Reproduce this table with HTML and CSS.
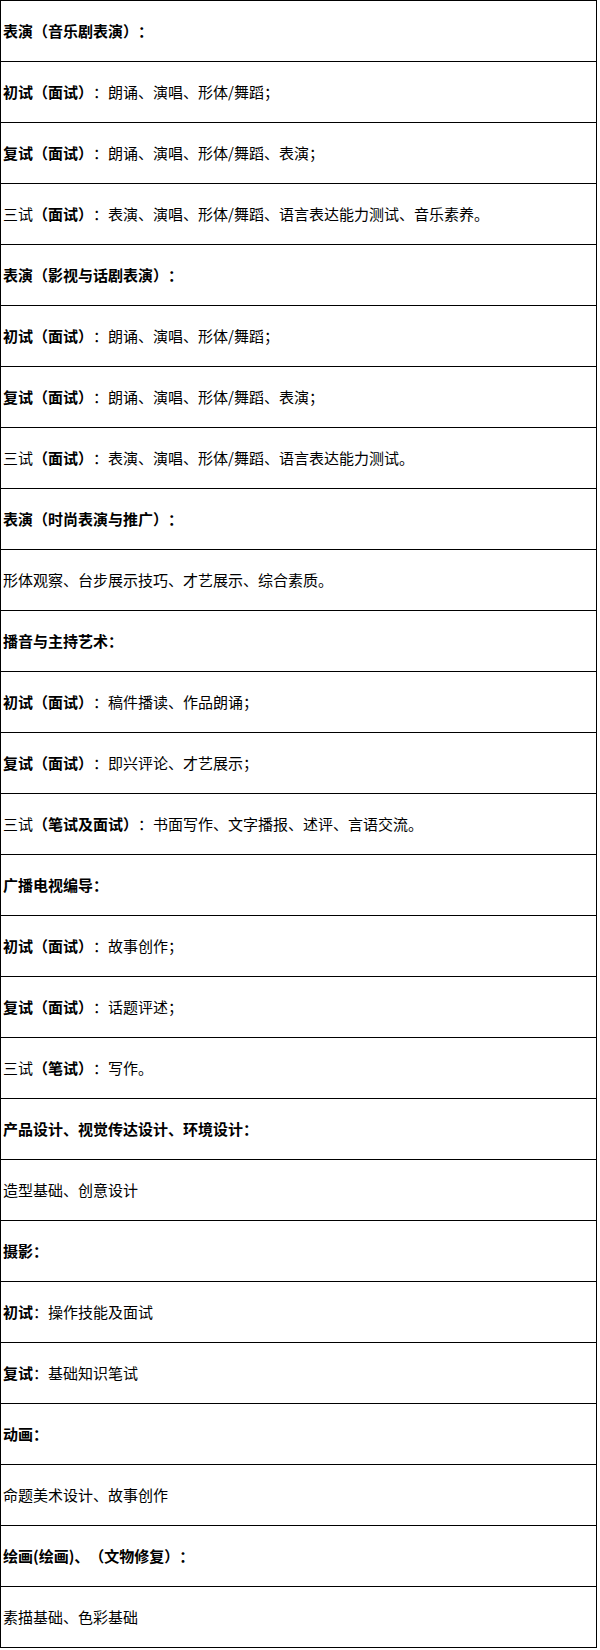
FILE: index.html
```html
<!DOCTYPE html>
<html lang="zh">
<head>
<meta charset="utf-8">
<link rel="stylesheet" href="styles.css">
</head>
<body>
<table class="exam">
<tbody>
<tr><td><b>表演（音乐剧表演）：</b></td></tr>
<tr><td><b>初试（面试）</b>：朗诵、演唱、形体/舞蹈；</td></tr>
<tr><td><b>复试（面试）</b>：朗诵、演唱、形体/舞蹈、表演；</td></tr>
<tr><td>三试<b>（面试）</b>：表演、演唱、形体/舞蹈、语言表达能力测试、音乐素养。</td></tr>
<tr><td><b>表演（影视与话剧表演）：</b></td></tr>
<tr><td><b>初试（面试）</b>：朗诵、演唱、形体/舞蹈；</td></tr>
<tr><td><b>复试（面试）</b>：朗诵、演唱、形体/舞蹈、表演；</td></tr>
<tr><td>三试<b>（面试）</b>：表演、演唱、形体/舞蹈、语言表达能力测试。</td></tr>
<tr><td><b>表演（时尚表演与推广）：</b></td></tr>
<tr><td>形体观察、台步展示技巧、才艺展示、综合素质。</td></tr>
<tr><td><b>播音与主持艺术：</b></td></tr>
<tr><td><b>初试（面试）</b>：稿件播读、作品朗诵；</td></tr>
<tr><td><b>复试（面试）</b>：即兴评论、才艺展示；</td></tr>
<tr><td>三试<b>（笔试及面试）</b>：书面写作、文字播报、述评、言语交流。</td></tr>
<tr><td><b>广播电视编导：</b></td></tr>
<tr><td><b>初试（面试）</b>：故事创作；</td></tr>
<tr><td><b>复试（面试）</b>：话题评述；</td></tr>
<tr><td>三试<b>（笔试）</b>：写作。</td></tr>
<tr><td><b>产品设计、视觉传达设计、环境设计：</b></td></tr>
<tr><td>造型基础、创意设计</td></tr>
<tr><td><b>摄影：</b></td></tr>
<tr><td><b>初试</b>：操作技能及面试</td></tr>
<tr><td><b>复试</b>：基础知识笔试</td></tr>
<tr><td><b>动画：</b></td></tr>
<tr><td>命题美术设计、故事创作</td></tr>
<tr><td><b>绘画(绘画)、（文物修复）：</b></td></tr>
<tr><td>素描基础、色彩基础</td></tr>
</tbody>
</table>
</body>
</html>
```

FILE: styles.css
```css
html, body {
  margin: 0;
  padding: 0;
  background: #ffffff;
}
body {
  font-family: "Noto Sans CJK SC", "Microsoft YaHei", sans-serif;
  font-size: 15px;
  color: #000000;
  text-spacing-trim: space-all;
}
.exam {
  border-collapse: collapse;
  width: 597px;
  margin: 0;
}
.exam td {
  border: 1px solid #000000;
  height: 60px;
  padding: 0 0 0 2px;
  vertical-align: middle;
  line-height: 20px;
}
.exam b {
  font-weight: 700;
}
```
